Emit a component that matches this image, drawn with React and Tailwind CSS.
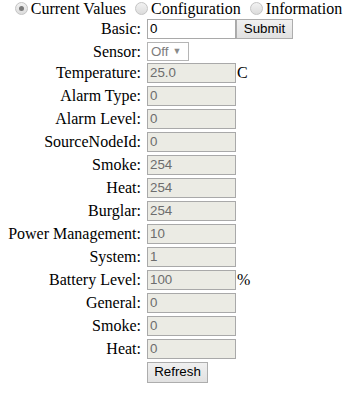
import React from "react";

const rows = [
  { label: "Temperature:", value: "25.0", unit: "C" },
  { label: "Alarm Type:", value: "0" },
  { label: "Alarm Level:", value: "0" },
  { label: "SourceNodeId:", value: "0" },
  { label: "Smoke:", value: "254" },
  { label: "Heat:", value: "254" },
  { label: "Burglar:", value: "254" },
  { label: "Power Management:", value: "10" },
  { label: "System:", value: "1" },
  { label: "Battery Level:", value: "100", unit: "%" },
  { label: "General:", value: "0" },
  { label: "Smoke:", value: "0" },
  { label: "Heat:", value: "0" },
];

function Radio({ checked }) {
  return (
    <span className="inline-block align-[-1px] w-[13px] h-[13px] ml-[5px] mr-[3px] rounded-full border border-[#c4c4c4] bg-gradient-to-b from-[#f2f2f2] to-[#dcdcdc] relative">
      {checked && (
        <span className="absolute left-[3px] top-[3px] w-[5px] h-[5px] rounded-full bg-[#7a7a7a]" />
      )}
    </span>
  );
}

function Label({ children }) {
  return (
    <div className="w-[133px] ml-2 mr-[6px] text-right text-[16px] leading-[20px] text-black shrink-0">
      {children}
    </div>
  );
}

function ReadOnly({ value }) {
  return (
    <div className="w-[89px] h-[20px] border border-[#a9a9a9] bg-[#ebebe4] px-[2px] text-[13.33px] leading-[18px] text-[#6d6d6d] font-['Liberation_Sans',Arial,sans-serif]">
      {value}
    </div>
  );
}

export default function App() {
  return (
    <div className="w-[352px] h-[397px] bg-white font-['Liberation_Serif','Times_New_Roman',serif] text-black">
      <div className="text-center text-[16px] leading-[17px] h-[19px] whitespace-nowrap">
        <Radio checked />Current Values <Radio />Configuration <Radio />Information
      </div>

      <div className="flex items-center h-[20px]">
        <Label>Basic:</Label>
        <div className="w-[89px] h-[20px] border border-[#a9a9a9] bg-white px-[2px] text-[13.33px] leading-[18px] text-black font-['Liberation_Sans',Arial,sans-serif]">
          0
        </div>
        <button className="w-[57px] h-[20px] border border-[#adadad] bg-gradient-to-b from-[#f0f0f0] to-[#e1e1e1] text-[13.33px] leading-[18px] text-black font-['Liberation_Sans',Arial,sans-serif]">
          Submit
        </button>
      </div>

      <div className="flex items-center h-[19px] mt-[3px]">
        <Label>Sensor:</Label>
        <div className="w-[42px] h-[19px] border border-[#b5b5b5] bg-white pl-[3px] flex items-center gap-[4px] text-[13.33px] leading-[17px] text-[#7d7d7d] font-['Liberation_Sans',Arial,sans-serif]">
          <span>Off</span>
          <span className="text-[9px] text-[#8a8a8a]">▼</span>
        </div>
      </div>

      <div className="flex flex-col gap-[3px] mt-[2px]">
        {rows.map((row, i) => (
          <div key={i} className="flex items-center h-[20px]">
            <Label>{row.label}</Label>
            <ReadOnly value={row.value} />
            {row.unit && <span className="ml-[1px] text-[16px] leading-[20px]">{row.unit}</span>}
          </div>
        ))}
        <div className="flex items-center h-[20px]">
          <div className="w-[147px] shrink-0" />
          <button className="w-[61px] h-[21px] border border-[#adadad] bg-gradient-to-b from-[#f0f0f0] to-[#e1e1e1] text-[13.33px] leading-[18px] text-black font-['Liberation_Sans',Arial,sans-serif]">
            Refresh
          </button>
        </div>
      </div>
    </div>
  );
}
